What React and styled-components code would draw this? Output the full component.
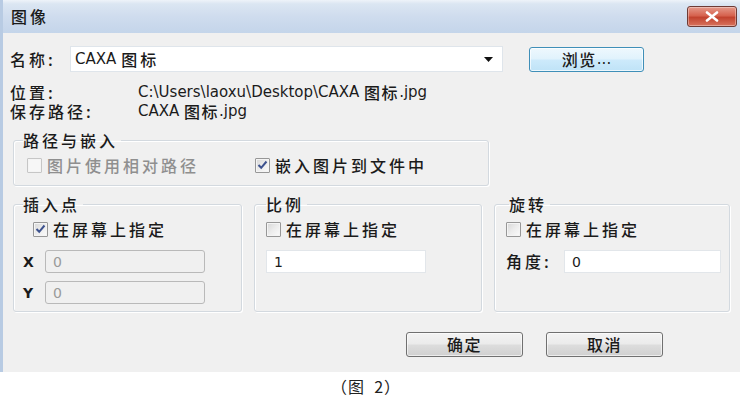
import React from "react";
import styled, { createGlobalStyle } from "styled-components";

const Global = createGlobalStyle`
  html, body { margin: 0; padding: 0; background: #ffffff; }
  body {
    font-family: "DejaVu Sans", "Noto Sans CJK SC", sans-serif;
    font-size: 15px;
    color: #1b1b1b;
  }
  * { box-sizing: border-box; }
`;

const Zh = styled.span`
  font-family: "Noto Sans CJK SC", sans-serif;
  font-size: 16px;
  line-height: 19px;
  letter-spacing: ${(p) => (p.$tight ? 1.5 : 3)}px;
  font-weight: 500;
`;

const Page = styled.div`
  width: 750px;
  height: 400px;
  background: #ffffff;
`;

const Dialog = styled.div`
  width: 740px;
  display: flex;
  flex-direction: column;
`;

const TitleBar = styled.div`
  height: 33px;
  display: flex;
  align-items: center;
  justify-content: space-between;
  padding: 0 3px 0 8px;
  background: linear-gradient(#eef3f9 0%, #dbe6f2 12%, #cfdcee 50%, #c4d5ea 100%);
  border-left: 3px solid #b8cbe3;
`;

const Title = styled(Zh)`
  color: #1a1a1a;
`;

const CloseButton = styled.div`
  width: 50px;
  height: 21px;
  border: 1px solid #6e3b35;
  border-radius: 3px;
  display: flex;
  align-items: center;
  justify-content: center;
  background: linear-gradient(#e59a8b 0%, #d6634f 45%, #c2432f 55%, #d8735e 100%);
  box-shadow: inset 0 0 0 1px rgba(255, 255, 255, 0.35);
`;

const Body = styled.div`
  background: #f0f0f0;
  border-left: 3px solid #b8cbe3;
  padding: 13px 9px 15px 7px;
  display: flex;
  flex-direction: column;
`;

const NameRow = styled.div`
  display: flex;
  align-items: center;
  height: 26px;
`;

const Label = styled.div`
  width: ${(p) => p.$w}px;
  flex: none;
  display: flex;
  align-items: center;
  color: #1b1b1b;
  font-weight: ${(p) => (p.$bold ? 700 : 400)};
  font-size: 14px;
`;

const Combo = styled.div`
  width: 433px;
  height: 26px;
  background: #ffffff;
  border: 1px solid #dfe5eb;
  display: flex;
  align-items: center;
  justify-content: space-between;
  padding: 0 9px 0 4px;
`;

const ComboText = styled.div`
  display: flex;
  align-items: center;
  gap: 5px;
  font-size: 15px;
`;

const BrowseButton = styled.div`
  margin-left: 26px;
  width: 115px;
  height: 25px;
  border: 1px solid #3f8fb8;
  border-radius: 3px;
  display: flex;
  align-items: center;
  justify-content: center;
  background: linear-gradient(#eef8fd 0%, #e0f2fc 48%, #cdeafb 52%, #bfe3f7 100%);
  box-shadow: inset 0 0 0 1px rgba(255, 255, 255, 0.7);
  font-size: 15px;
`;

const InfoBlock = styled.div`
  margin-top: 11px;
  display: flex;
  flex-direction: column;
`;

const InfoRow = styled.div`
  display: flex;
  align-items: center;
  height: 19px;
  line-height: 19px;
`;

const Value = styled.div`
  display: flex;
  align-items: center;
  font-size: 15px;
  white-space: pre;
`;

const Group = styled.fieldset`
  margin: 0;
  width: ${(p) => p.$w}px;
  padding: 5px 0 ${(p) => p.$pb}px ${(p) => p.$pl}px;
  border: 1px solid #d3d9df;
  border-radius: 3px;
  box-shadow: inset 1px 1px 0 #ffffff, 1px 1px 0 #ffffff;
  display: flex;
  flex-direction: column;
  min-width: 0;
`;

const Legend = styled.legend`
  padding: 0 3px 0 0;
  margin-left: ${(p) => p.$ml || 0}px;
  height: 19px;
  line-height: 19px;
  display: flex;
  align-items: center;
`;

const PathGroupWrap = styled.div`
  margin: 10px 0 0 3px;
  display: flex;
`;

const GroupsRow = styled.div`
  margin: 9px 0 0 3px;
  display: flex;
  align-items: stretch;
  gap: 12px;
`;

const CheckLine = styled.div`
  display: flex;
  align-items: center;
  height: 20px;
`;

const CheckItem = styled.div`
  display: flex;
  align-items: center;
  gap: 5px;
  height: 20px;
  width: ${(p) => (p.$w ? `${p.$w}px` : "auto")};
  margin-left: ${(p) => p.$ml || 0}px;
  color: ${(p) => (p.$disabled ? "#8f8f8f" : "#1b1b1b")};
`;

const Box = styled.div`
  width: 15px;
  height: 15px;
  flex: none;
  border: 1px solid ${(p) => (p.$disabled ? "#c6c6c6" : "#979797")};
  border-radius: 1px;
  background: ${(p) =>
    p.$disabled
      ? "#f7f7f7"
      : "linear-gradient(135deg, #d6d6d6 0%, #ececec 50%, #fbfbfb 100%)"};
  box-shadow: inset 0 0 0 1px #f4f4f4;
  display: flex;
  align-items: center;
  justify-content: center;
`;

const FieldRow = styled.div`
  display: flex;
  align-items: center;
  height: 23px;
  margin-top: ${(p) => p.$mt}px;
`;

const TextInput = styled.input`
  width: ${(p) => p.$w}px;
  height: 23px;
  padding: 0 0 0 7px;
  margin: 0;
  font-family: "DejaVu Sans", sans-serif;
  font-size: 14px;
  outline: none;
  color: ${(p) => (p.disabled ? "#9a9a9a" : "#1b1b1b")};
  background: ${(p) => (p.disabled ? "#f0f0f0" : "#ffffff")};
  border: 1px solid ${(p) => (p.disabled ? "#b9b9b9" : "#e2e6ea")};
  border-radius: ${(p) => (p.disabled ? 3 : 0)}px;
`;

const ButtonRow = styled.div`
  margin-top: 20px;
  display: flex;
  justify-content: flex-end;
  gap: 23px;
  padding-right: 68px;
`;

const Button = styled.div`
  width: 117px;
  height: 25px;
  border: 1px solid #707070;
  border-radius: 3px;
  display: flex;
  align-items: center;
  justify-content: center;
  background: linear-gradient(#f3f3f3 0%, #ebebeb 48%, #dddddd 52%, #d0d0d0 100%);
  box-shadow: inset 0 0 0 1px rgba(255, 255, 255, 0.6);
`;

const Caption = styled.div`
  width: 740px;
  height: 28px;
  display: flex;
  align-items: center;
  justify-content: center;
  padding-right: 8px;
  font-family: "Noto Sans CJK SC", sans-serif;
  font-size: 16px;
  color: #222;
  letter-spacing: 1px;
`;

const Check = () => (
  <svg width="11" height="10" viewBox="0 0 11 10">
    <path d="M1.5 5 L4.2 7.8 L9.5 1.5" fill="none" stroke="#3d528e" strokeWidth="2" />
  </svg>
);

const Checkbox = ({ checked, disabled, label, w, ml }) => (
  <CheckItem $disabled={disabled} $w={w} $ml={ml}>
    <Box $disabled={disabled}>{checked && <Check />}</Box>
    <Zh>{label}</Zh>
  </CheckItem>
);

export default function App() {
  return (
    <Page>
      <Global />
      <Dialog>
        <TitleBar>
          <Title>图像</Title>
          <CloseButton>
            <svg width="14" height="11" viewBox="0 0 14 11">
              <path d="M2 1.5 L12 9.5 M12 1.5 L2 9.5" stroke="#ffffff" strokeWidth="2.6" strokeLinecap="round" />
            </svg>
          </CloseButton>
        </TitleBar>
        <Body>
          <NameRow>
            <Label $w={60}>
              <Zh>名称:</Zh>
            </Label>
            <Combo>
              <ComboText>
                <span>CAXA</span>
                <Zh>图标</Zh>
              </ComboText>
              <svg width="9" height="5" viewBox="0 0 9 5">
                <path d="M0 0 L9 0 L4.5 5 Z" fill="#111" />
              </svg>
            </Combo>
            <BrowseButton>
              <Zh $tight>浏览</Zh>
              <span>...</span>
            </BrowseButton>
          </NameRow>

          <InfoBlock>
            <InfoRow>
              <Label $w={128}>
                <Zh>位置:</Zh>
              </Label>
              <Value>
                C:\Users\laoxu\Desktop\CAXA <Zh $tight>图标</Zh>.jpg
              </Value>
            </InfoRow>
            <InfoRow>
              <Label $w={128}>
                <Zh>保存路径:</Zh>
              </Label>
              <Value>
                CAXA <Zh $tight>图标</Zh>.jpg
              </Value>
            </InfoRow>
          </InfoBlock>

          <PathGroupWrap>
            <Group $w={476} $pl={13} $pb={10}>
              <Legend $ml={-4}>
                <Zh>路径与嵌入</Zh>
              </Legend>
              <CheckLine>
                <Checkbox disabled label="图片使用相对路径" w={228} />
                <Checkbox checked label="嵌入图片到文件中" />
              </CheckLine>
            </Group>
          </PathGroupWrap>

          <GroupsRow>
            <Group $w={229} $pl={9} $pb={7}>
              <Legend>
                <Zh>插入点</Zh>
              </Legend>
              <Checkbox checked label="在屏幕上指定" ml={10} />
              <FieldRow $mt={11}>
                <Label $w={22} $bold>X</Label>
                <TextInput $w={160} disabled readOnly value="0" />
              </FieldRow>
              <FieldRow $mt={8}>
                <Label $w={22} $bold>Y</Label>
                <TextInput $w={160} disabled readOnly value="0" />
              </FieldRow>
            </Group>
            <Group $w={228} $pl={11} $pb={7}>
              <Legend>
                <Zh>比例</Zh>
              </Legend>
              <Checkbox label="在屏幕上指定" />
              <FieldRow $mt={11}>
                <TextInput $w={160} readOnly value="1" />
              </FieldRow>
            </Group>
            <Group $w={236} $pl={11} $pb={7}>
              <Legend $ml={3}>
                <Zh>旋转</Zh>
              </Legend>
              <Checkbox label="在屏幕上指定" />
              <FieldRow $mt={11}>
                <Label $w={58}>
                  <Zh>角度:</Zh>
                </Label>
                <TextInput $w={157} readOnly value="0" />
              </FieldRow>
            </Group>
          </GroupsRow>

          <ButtonRow>
            <Button>
              <Zh $tight>确定</Zh>
            </Button>
            <Button>
              <Zh $tight>取消</Zh>
            </Button>
          </ButtonRow>
        </Body>
        <Caption>（图&nbsp;&nbsp;2）</Caption>
      </Dialog>
    </Page>
  );
}
